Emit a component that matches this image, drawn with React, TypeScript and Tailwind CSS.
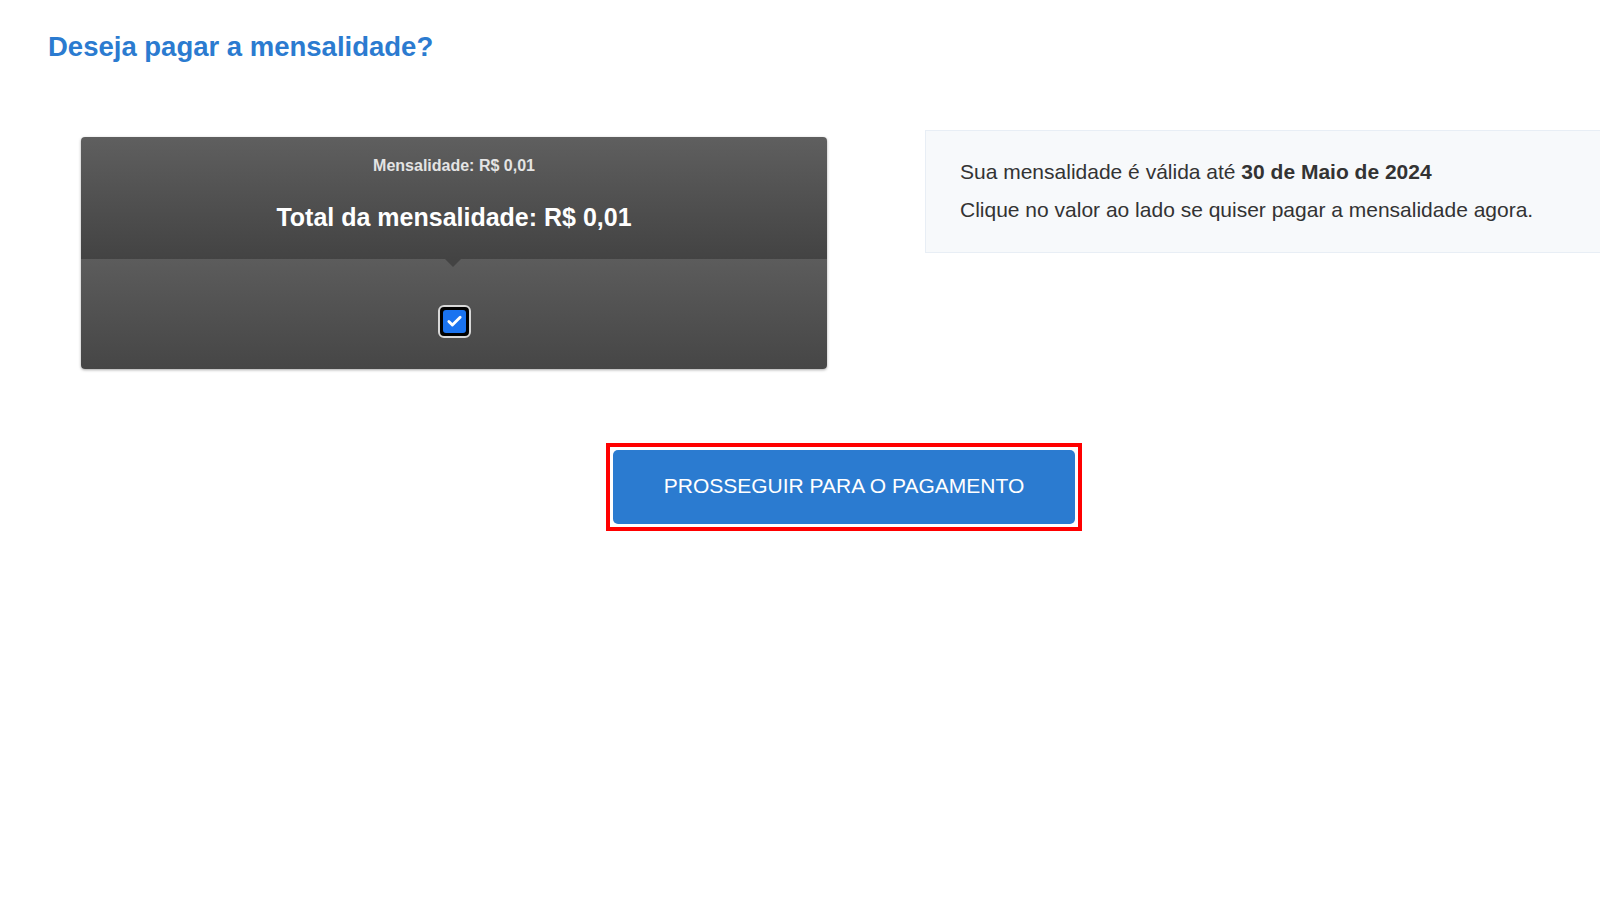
import { Check } from 'lucide-react';

export default function App() {
  return (
    <div className="min-h-screen w-[1600px] overflow-hidden bg-white font-['Liberation_Sans',Arial,sans-serif]">
      {/* Title */}
      <h1 className="pl-[48px] pt-[30px] text-[27.5px] font-bold leading-[34px] text-[#2b7bd0]">
        Deseja pagar a mensalidade?
      </h1>

      <div className="mt-[66px] flex items-start">
        {/* Card */}
        <div className="ml-[81px] mt-[7px] w-[746px] shrink-0 overflow-hidden rounded-[4px] shadow-[0_1px_3px_rgba(0,0,0,0.35)]">
          <div className="relative flex h-[122px] flex-col items-center bg-gradient-to-b from-[#5f5f5f] to-[#434343] pt-[19px]">
            <p className="text-[16px] font-bold leading-[20px] text-[#e4e4e4]">Mensalidade: R$ 0,01</p>
            <p className="mt-[26px] text-[25px] font-bold leading-[30px] text-white">
              Total da mensalidade: R$ 0,01
            </p>
            <div className="absolute bottom-[-8px] left-[364px] h-0 w-0 border-x-[8px] border-t-[8px] border-x-transparent border-t-[#434343]" />
          </div>
          <div className="flex h-[110px] items-start justify-center bg-gradient-to-b from-[#5c5c5c] to-[#464646] pt-[46px]">
            <div className="flex h-[33px] w-[33px] items-center justify-center rounded-[6px] border-2 border-[#d8d8d8] bg-black">
              <div className="flex h-[23px] w-[23px] items-center justify-center rounded-[3px] bg-[#1a73f0]">
                <Check className="h-[17px] w-[17px] text-white" strokeWidth={4} />
              </div>
            </div>
          </div>
        </div>

        {/* Info */}
        <div className="ml-[98px] flex-1 border border-r-0 border-[#e8eef5] bg-[#f7f9fb] pb-[29px] pl-[34px] pt-[28px] text-[21px] text-[#333]">
          <p className="leading-[26px]">
            Sua mensalidade é válida até <span className="font-bold">30 de Maio de 2024</span>
          </p>
          <p className="mt-[12px] leading-[26px]">Clique no valor ao lado se quiser pagar a mensalidade agora.</p>
        </div>
      </div>

      {/* Action */}
      <div className="mt-[74px] flex pl-[606px]">
        <div className="border-4 border-[#ff0000] bg-white p-[3px]">
          <button className="h-[74px] w-[462px] rounded-[5px] bg-[#2b7bd0] pb-[3px] text-[21px] text-white">
            PROSSEGUIR PARA O PAGAMENTO
          </button>
        </div>
      </div>
    </div>
  );
}
